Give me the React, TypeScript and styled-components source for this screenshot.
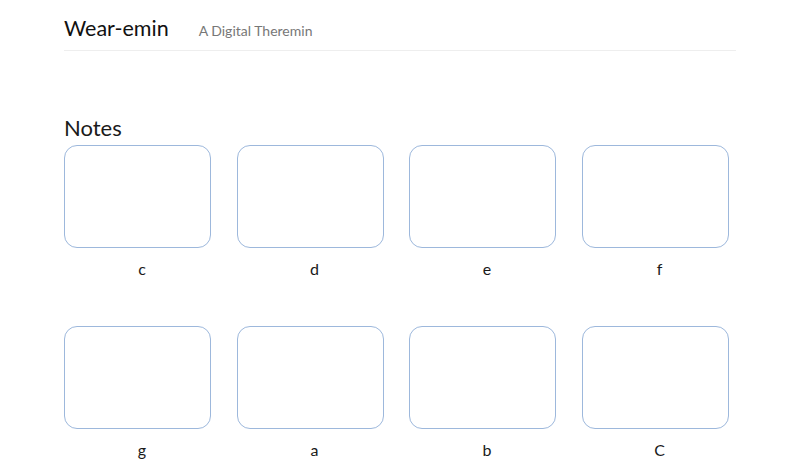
import * as React from "react";
import styled, { createGlobalStyle } from "styled-components";

const GlobalStyle = createGlobalStyle`
  html, body {
    margin: 0;
    padding: 0;
    background: #fff;
    font-family: Lato, "Helvetica Neue", Arial, sans-serif;
    color: #222;
  }
`;

const Container = styled.div`
  width: 672px;
  margin: 0 auto;
`;

const Header = styled.header`
  display: flex;
  align-items: baseline;
  gap: 30px;
  height: 51px;
  border-bottom: 1px solid #eeeeee;
  box-sizing: border-box;
`;

const Brand = styled.h1`
  margin: 0;
  padding-top: 13px;
  font-size: 21.5px;
  font-weight: 400;
  line-height: 30px;
  color: #111;
`;

const Tagline = styled.span`
  font-size: 14px;
  color: #777;
`;

const SectionTitle = styled.h2`
  margin: 64px 0 4px;
  font-size: 22px;
  font-weight: 400;
  line-height: 26px;
  color: #1a1a1a;
`;

const Grid = styled.div`
  display: grid;
  grid-template-columns: repeat(4, 156px);
  column-gap: 16.5px;
  row-gap: 45px;
`;

const Note = styled.div`
  display: flex;
  flex-direction: column;
  align-items: center;
`;

const Pad = styled.div`
  align-self: flex-start;
  width: 147px;
  height: 103px;
  box-sizing: border-box;
  border: 1px solid #9db8dc;
  border-radius: 13px;
  background: #fff;
`;

const Label = styled.span`
  margin-top: 9px;
  font-size: 16px;
  line-height: 24px;
  color: #1a1a1a;
`;

const notes = ["c", "d", "e", "f", "g", "a", "b", "C"];

export default function App() {
  return (
    <>
      <GlobalStyle />
      <Container>
        <Header>
          <Brand>Wear-emin</Brand>
          <Tagline>A Digital Theremin</Tagline>
        </Header>
        <SectionTitle>Notes</SectionTitle>
        <Grid>
          {notes.map((n) => (
            <Note key={n}>
              <Pad />
              <Label>{n}</Label>
            </Note>
          ))}
        </Grid>
      </Container>
    </>
  );
}
